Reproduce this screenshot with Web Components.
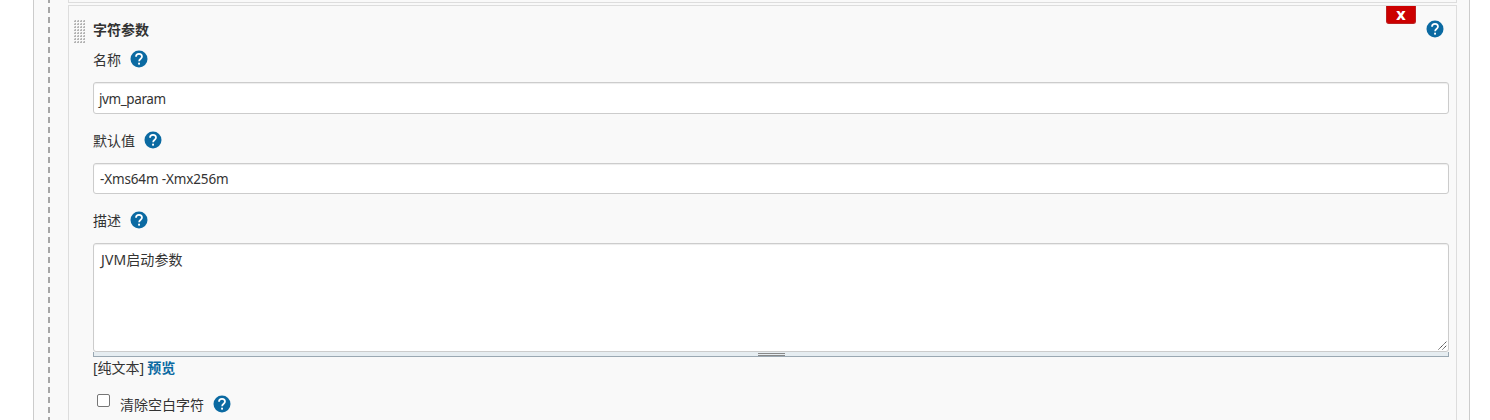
<!DOCTYPE html>
<html lang="zh"><head><meta charset="utf-8"><title>字符参数</title>
<style>
html,body{margin:0;height:420px;overflow:hidden;background:#fff}
body{font:14px/20px "Noto Sans","Noto Sans CJK SC",sans-serif;color:#333}
</style></head><body>
<config-panel>
<param-block heading="字符参数">
<form-row label="名称"><text-field value="jvm_param" style="--h:32px;--ls:-.4px;--pt:7px;--pl:5px"></text-field></form-row>
<form-row label="默认值" style="--top:17px"><text-field value="-Xms64m -Xmx256m" style="--h:31px;--ls:-.14px"></text-field></form-row>
<form-row label="描述" style="--top:17px"><text-area value="JVM启动参数"></text-area></form-row>
<preview-bar></preview-bar>
<check-row>清除空白字符</check-row>
</param-block>
</config-panel>
<script>
const make=(name,html,init)=>customElements.define(name,class extends HTMLElement{
constructor(){super();this.attachShadow({mode:"open"}).innerHTML=`<style>*{box-sizing:border-box}:host{box-sizing:border-box}</style>`+html;
if(init)init(this,this.shadowRoot)}});
make("help-icon",`<style>:host{display:block;width:18px;height:18px;flex:none}svg{display:block}</style>
<svg width="18" height="18" viewBox="0 0 18 18"><circle cx="9" cy="9" r="8.5" fill="#0b6aa2"/><path d="M6 6.8C6 4.9 7.3 3.9 9 3.9s3 1 3 2.8c0 2-2.9 2.1-2.9 4.6" fill="none" stroke="#fff" stroke-width="1.7"/><rect x="8.1" y="12.7" width="1.9" height="1.9" fill="#fff"/></svg>`);
make("config-panel",`<style>:host{display:flex;margin-left:33px;width:1437px;height:420px;border:solid #ccc;border-width:0 1px;background:#f9f9f9}
.dash{width:2px;margin-left:14px;background:repeating-linear-gradient(#a6a6a6 0 6px,transparent 6px 10px) 0 -3px/2px 430px}
.body{margin-left:18px;width:1389px}.prev{height:3px;border:1px solid #ddd;border-top:0;margin-bottom:2px}</style>
<div class="dash"></div><div class="body"><div class="prev"></div><slot></slot></div>`);
make("param-block",`<style>:host{display:block;position:relative;height:430px;border:1px solid #ddd;padding:14px 7px 0 24px}
.grip{position:absolute;left:5px;top:14px}.del{position:absolute;right:40px;top:0;width:30px;height:18px;background:#c00;border:1px solid #b22;border-top:0;border-radius:0 0 3px 3px;color:#fff;font:800 13px/19px "Open Sans","Noto Sans",sans-serif;text-align:center}
help-icon{position:absolute;right:12px;top:14px}.h{font-weight:bold;height:20px}</style>
<svg class="grip" width="12" height="24"><defs><pattern id="p" width="3" height="3" patternUnits="userSpaceOnUse"><path fill="#dedede" d="M0 0h2v2H0z"/><path fill="#b4b4b4" d="M1 0h1v2H0V1h1z"/></pattern></defs><rect width="12" height="24" fill="url(#p)"/></svg>
<div class="del">X</div><help-icon></help-icon><div class="h"></div><slot></slot>`,(e,s)=>s.querySelector(".h").textContent=e.getAttribute("heading"));
make("form-row",`<style>:host{display:block;padding-top:var(--top,10px)}
.l{display:flex;align-items:center;gap:9px;height:20px;margin-bottom:12px}help-icon{margin-top:-2px}</style>
<div class="l"><span></span><help-icon></help-icon></div><slot></slot>`,(e,s)=>s.querySelector("span").textContent=e.getAttribute("label"));
make("text-field",`<style>:host{display:block}div{height:var(--h);border:1px solid #ccc;border-radius:3px;background:#fff;padding:var(--pt,6px) 6px 0 var(--pl,6px);font-size:13.5px;letter-spacing:var(--ls);line-height:19px;box-shadow:inset 0 1px 1px rgba(0,0,0,.075)}</style><div></div>`,(e,s)=>s.querySelector("div").textContent=e.getAttribute("value"));
make("text-area",`<style>:host{display:block}.t{position:relative;height:109px;border:1px solid #ccc;border-radius:3px;background:#fff;padding:6px 6px 6px 7px;letter-spacing:.1px;box-shadow:inset 0 1px 1px rgba(0,0,0,.075)}
svg{position:absolute;right:1px;bottom:1px}.r{height:5px;background:#e6edf1;border:1px solid #9aa8b2;border-top:0;display:flex;justify-content:center}.r i{width:27px;height:3px;border:solid #888;border-width:1px 0;margin-top:1px}</style>
<div class="t"><span></span><svg width="9" height="9"><path d="M.5 8.5l8-8M4.5 8.5l4-4" stroke="#444" stroke-dasharray="1.4 .4"/></svg></div><div class="r"><i></i></div>`,(e,s)=>s.querySelector("span").textContent=e.getAttribute("value"));
make("preview-bar",`<style>:host{display:block;height:20px;margin-top:1px}b{color:#0b6aa2;margin-left:-.5px}</style>[纯文本] <b>预览</b>`);
make("check-row",`<style>:host{display:flex;margin-top:16px;align-items:flex-start}.c{width:13px;height:13px;border:1px solid #767676;border-radius:2px;background:#fff;margin:0 10px 0 4px}span{padding-top:1px}help-icon{margin:1px 0 0 9px}</style><div class="c"></div><span><slot></slot></span><help-icon></help-icon>`);
</script></body></html>
